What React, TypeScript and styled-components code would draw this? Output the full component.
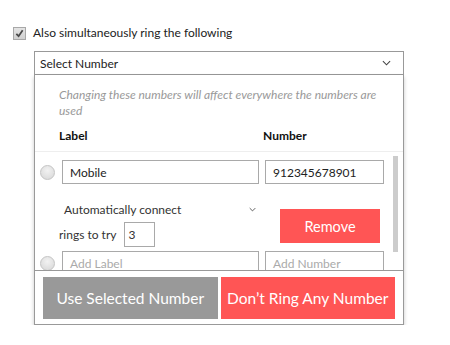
import React from "react";
import styled, { createGlobalStyle } from "styled-components";

const GlobalStyle = createGlobalStyle`
  body {
    margin: 0;
    background: #fff;
    font-family: Lato, "Liberation Sans", sans-serif;
    color: #222;
  }
`;

const Page = styled.div`
  padding: 26px 0 0 13px;
`;

const CheckRow = styled.label`
  display: flex;
  align-items: center;
  gap: 7px;
  font-size: 12px;
  line-height: 14px;
  color: #222;
`;

const CheckBox = styled.span`
  width: 11px;
  height: 11px;
  border: 1px solid #a8a8a8;
  background: linear-gradient(#e4e4e4, #d0d0d0);
  display: flex;
  align-items: center;
  justify-content: center;
`;

const Panel = styled.div`
  width: 370px;
  margin: 11px 0 0 21px;
  box-sizing: border-box;
`;

const SelectBox = styled.div`
  height: 24px;
  box-sizing: border-box;
  border: 1px solid #999;
  display: flex;
  align-items: center;
  justify-content: space-between;
  padding: 0 12px 0 5px;
  font-size: 12px;
`;

const Body = styled.div`
  border: 1px solid #999;
  border-top: none;
  box-shadow: 0 2px 4px rgba(0, 0, 0, 0.22);
`;

const Hint = styled.p`
  margin: 0;
  padding: 12px 20px 0 24px;
  font-size: 12px;
  line-height: 16px;
  font-style: italic;
  color: #999;
`;

const Headers = styled.div`
  display: grid;
  grid-template-columns: 204px 1fr;
  padding: 9px 0 7px 24px;
  font-size: 12px;
  line-height: 16px;
  font-weight: 700;
  color: #111;
`;

const ScrollArea = styled.div`
  position: relative;
  height: 120px;
  overflow: hidden;
  border-top: 1px solid #eee;
  border-bottom: 1px solid #999;
  padding: 8px 0 0 5px;
  box-sizing: border-box;
`;

const Thumb = styled.div`
  position: absolute;
  top: 4px;
  right: 5px;
  width: 5px;
  height: 96px;
  background: #ccc;
`;

const Row = styled.div`
  display: flex;
  align-items: center;
  gap: 7px;
`;

const Radio = styled.span`
  width: 13px;
  height: 13px;
  border-radius: 50%;
  border: 1px solid #c4c4c4;
  background: radial-gradient(circle at 50% 35%, #f2f2f2, #d6d6d6);
  flex: none;
`;

const Field = styled.div<{ $w: number; $placeholder?: boolean }>`
  width: ${(p) => p.$w}px;
  height: 24px;
  box-sizing: border-box;
  border: 1px solid #a9a9a9;
  display: flex;
  align-items: center;
  padding-left: 7px;
  font-size: 12px;
  color: ${(p) => (p.$placeholder ? "#aaa" : "#222")};
`;

const Inputs = styled.div`
  display: flex;
  gap: 6px;
`;

const Details = styled.div`
  display: flex;
  align-items: flex-start;
  padding: 14px 0 4px 19px;
`;

const DetailLeft = styled.div`
  width: 204px;
  display: flex;
  flex-direction: column;
`;

const AutoSelect = styled.div`
  height: 22px;
  display: flex;
  align-items: center;
  justify-content: space-between;
  padding: 0 7px 0 5px;
  font-size: 12px;
  color: #333;
`;

const RingsRow = styled.div`
  display: flex;
  align-items: center;
  gap: 8px;
  margin-top: 2px;
  font-size: 12px;
  color: #333;
`;

const SmallField = styled.div`
  width: 31px;
  height: 25px;
  box-sizing: border-box;
  border: 1px solid #a9a9a9;
  padding-left: 3px;
  display: flex;
  align-items: center;
  font-size: 12px;
`;

const RemoveButton = styled.button`
  margin: 11px 0 0 17px;
  width: 100px;
  height: 34px;
  border: none;
  background: #ff5555;
  color: #fff;
  font-family: inherit;
  font-size: 14.5px;
`;

const Footer = styled.div`
  display: flex;
  gap: 3px;
  padding: 6px 8px 5px 8px;
`;

const ActionButton = styled.button<{ $danger?: boolean }>`
  flex: 1;
  height: 42px;
  border: none;
  background: ${(p) => (p.$danger ? "#ff5555" : "#999999")};
  color: #fff;
  font-family: inherit;
  font-size: 15.5px;
  padding: 0;
`;

const Chevron = ({ w, h }: { w: number; h: number }) => (
  <svg width={w} height={h} viewBox="0 0 10 6">
    <path d="M1 1 L5 5 L9 1" fill="none" stroke="#444" strokeWidth="1.2" />
  </svg>
);

export default function App() {
  return (
    <>
      <GlobalStyle />
      <Page>
        <CheckRow>
          <CheckBox>
            <svg width="9" height="9" viewBox="0 0 10 10">
              <path
                d="M1.5 5.5 L4 8 L8.5 1.5"
                fill="none"
                stroke="#4a4a4a"
                strokeWidth="2"
              />
            </svg>
          </CheckBox>
          Also simultaneously ring the following
        </CheckRow>
        <Panel>
          <SelectBox>
            Select Number
            <Chevron w={9} h={6} />
          </SelectBox>
          <Body>
            <Hint>
              Changing these numbers will affect everywhere the numbers are
              used
            </Hint>
            <Headers>
              <span>Label</span>
              <span>Number</span>
            </Headers>
            <ScrollArea>
              <Thumb />
              <Row>
                <Radio />
                <Inputs>
                  <Field $w={197}>Mobile</Field>
                  <Field $w={119}>912345678901</Field>
                </Inputs>
              </Row>
              <Details>
                <DetailLeft>
                  <AutoSelect>
                    Automatically connect
                    <Chevron w={7} h={5} />
                  </AutoSelect>
                  <RingsRow>
                    rings to try
                    <SmallField>3</SmallField>
                  </RingsRow>
                </DetailLeft>
                <RemoveButton>Remove</RemoveButton>
              </Details>
              <Row>
                <Radio />
                <Inputs>
                  <Field $w={197} $placeholder>
                    Add Label
                  </Field>
                  <Field $w={119} $placeholder>
                    Add Number
                  </Field>
                </Inputs>
              </Row>
            </ScrollArea>
            <Footer>
              <ActionButton>Use Selected Number</ActionButton>
              <ActionButton $danger>Don’t Ring Any Number</ActionButton>
            </Footer>
          </Body>
        </Panel>
      </Page>
    </>
  );
}
